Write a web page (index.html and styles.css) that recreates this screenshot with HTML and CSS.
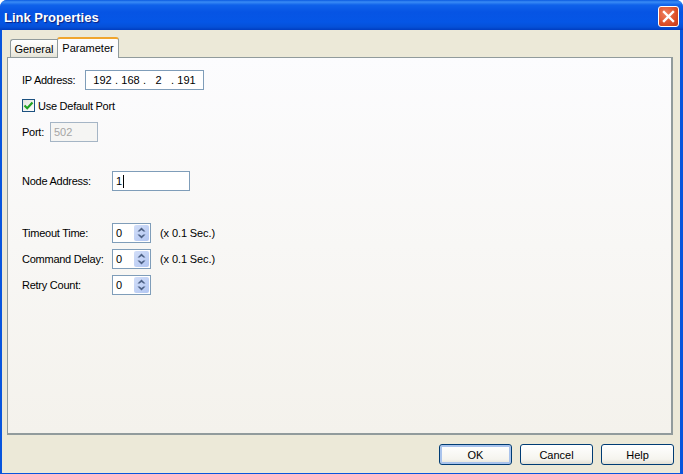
FILE: index.html
```html
<!DOCTYPE html>
<html lang="en">
<head>
<meta charset="utf-8">
<title>Link Properties</title>
<link rel="stylesheet" href="styles.css">
</head>
<body>
<div class="window">
  <header class="titlebar">
    <span class="title">Link Properties</span>
    <button class="close" aria-label="Close">
      <svg width="15" height="15" viewBox="0 0 15 15"><path d="M3 3L12 12M12 3L3 12" stroke="#fff" stroke-width="2.4" stroke-linecap="square"/></svg>
    </button>
  </header>
  <main class="client">
    <div class="tabs">
      <div class="tab">General</div>
      <div class="tab active">Parameter</div>
    </div>
    <section class="panel">
      <div class="row row-ip">
        <label class="lbl lbl-ip">IP Address:</label>
        <div class="field ip">
          <span class="oct">192</span><span class="dot">.</span><span class="oct">168</span><span class="dot">.</span><span class="oct">2</span><span class="dot">.</span><span class="oct">191</span>
        </div>
      </div>
      <div class="row row-check">
        <span class="check">
          <svg width="11" height="11" viewBox="0 0 11 11"><path d="M1.5 5.5L4.2 8.2L9.5 2.5" fill="none" stroke="#21a121" stroke-width="2.2"/></svg>
        </span>
        <label class="lbl">Use Default Port</label>
      </div>
      <div class="row row-port">
        <label class="lbl lbl-port">Port:</label>
        <div class="field port disabled">502</div>
      </div>
      <div class="row row-node">
        <label class="lbl lbl-long">Node Address:</label>
        <div class="field node">1<span class="caret"></span></div>
      </div>
      <div class="row row-timeout">
        <label class="lbl lbl-long">Timeout Time:</label>
        <div class="spin">
          <span class="spin-val">0</span>
          <span class="spin-btns">
            <svg width="15" height="16" viewBox="0 0 15 16"><path d="M7.5 2.5L11.5 6.5H9.5L7.5 5L5.5 6.5H3.5ZM3.5 9.5H5.5L7.5 11L9.5 9.5H11.5L7.5 13.5Z" fill="#4d6185"/></svg>
          </span>
        </div>
        <span class="unit">(x 0.1 Sec.)</span>
      </div>
      <div class="row row-spin">
        <label class="lbl lbl-long">Command Delay:</label>
        <div class="spin">
          <span class="spin-val">0</span>
          <span class="spin-btns">
            <svg width="15" height="16" viewBox="0 0 15 16"><path d="M7.5 2.5L11.5 6.5H9.5L7.5 5L5.5 6.5H3.5ZM3.5 9.5H5.5L7.5 11L9.5 9.5H11.5L7.5 13.5Z" fill="#4d6185"/></svg>
          </span>
        </div>
        <span class="unit">(x 0.1 Sec.)</span>
      </div>
      <div class="row row-spin">
        <label class="lbl lbl-long">Retry Count:</label>
        <div class="spin">
          <span class="spin-val">0</span>
          <span class="spin-btns">
            <svg width="15" height="16" viewBox="0 0 15 16"><path d="M7.5 2.5L11.5 6.5H9.5L7.5 5L5.5 6.5H3.5ZM3.5 9.5H5.5L7.5 11L9.5 9.5H11.5L7.5 13.5Z" fill="#4d6185"/></svg>
          </span>
        </div>
      </div>
    </section>
    <footer class="actions">
      <button class="btn default">OK</button>
      <button class="btn">Cancel</button>
      <button class="btn">Help</button>
    </footer>
  </main>
</div>
</body>
</html>
```

FILE: styles.css
```css
* { box-sizing: border-box; }
html, body { margin: 0; padding: 0; }
body { width: 683px; height: 474px; overflow: hidden; background: #fff; font: 11px "Liberation Sans", Arial, sans-serif; color: #000; }
.window { width: 683px; height: 474px; display: flex; flex-direction: column; background: #0855dd; padding: 0 3px 1px 2px; border-radius: 7px 7px 0 0; }
.titlebar { height: 30px; flex: none; margin: 0 -3px 0 -2px; padding: 0 4px 0 4px; display: flex; align-items: center; justify-content: space-between; border-radius: 7px 7px 0 0;
  background: linear-gradient(#0a5ae0 0, #3a8cf5 2px, #0f62ea 5px, #0654e4 12px, #0556e6 22px, #0550d8 27px, #003dc0 30px); }
.title { font: bold 13px "Liberation Sans", Arial, sans-serif; color: #fff; text-shadow: 1px 1px 1px #0f1f7a; margin-top: 4px; }
.close { width: 21px; height: 21px; padding: 0; margin-top: 3px; display: flex; align-items: center; justify-content: center; border: 1px solid #fff; border-radius: 3px; background: radial-gradient(circle at 35% 35%, #ef7f5e, #dd4f28 60%, #c1391a); }
.client { flex: 1; background: #ece9d8; display: flex; flex-direction: column; padding: 7px 0 0 5px; min-height: 0; }
.tabs { display: flex; align-items: flex-end; height: 20px; flex: none; padding-left: 3px; position: relative; z-index: 1; }
.tab { height: 18px; width: 47px; padding-top: 3px; text-align: center; background: linear-gradient(#fff, #f1f0e8 70%, #e4e2d6); border: 1px solid #919b9c; border-bottom: 0; border-right: 0; border-radius: 3px 0 0 0; }
.tab.active { height: 21px; width: 62px; padding-top: 3px; background: #fcfcfe; border: 1px solid #919b9c; border-top: 2px solid #f0a52e; border-bottom: 0; border-radius: 3px 3px 0 0; margin-bottom: -1px; }
.panel { height: 378px; width: 666px; flex: none; border: 1px solid #919b9c; border-right-width: 2px; border-bottom-width: 2px; background: linear-gradient(#fcfcfe, #f4f2ec); padding: 12px 14px 0; }
.row { display: flex; align-items: center; }
.row-check { margin-top: 9px; height: 13px; }
.row-port { margin-top: 10px; }
.row-node { margin-top: 29px; }
.row-timeout { margin-top: 32px; }
.row-spin { margin-top: 6px; }
.lbl { white-space: nowrap; letter-spacing: -0.25px; }
.lbl-ip { width: 63px; }
.lbl-port { width: 28px; }
.lbl-long { width: 90px; }
.field { height: 20px; border: 1px solid #7f9db9; background: #fff; display: flex; align-items: center; padding-left: 3px; }
.ip { width: 119px; padding-left: 6px; }
.oct { display: inline-block; width: 21px; text-align: center; }
.dot { width: 7px; text-align: center; }
.port { width: 48px; }
.disabled { color: #a5a5a5; border-color: #a5b5c5; background: #f5f5f3; }
.node { width: 78px; }
.caret { width: 1px; height: 13px; background: #000; margin-left: 1px; }
.check { width: 13px; height: 13px; border: 1px solid #1c5180; background: linear-gradient(135deg, #e3e3dc, #fff); margin-right: 3px; display: flex; align-items: center; justify-content: center; }
.spin { width: 39px; height: 20px; border: 1px solid #7f9db9; background: #fff; display: flex; justify-content: space-between; align-items: center; padding: 1px; }
.spin-val { padding-left: 2px; }
.spin-btns { width: 15px; height: 16px; border-radius: 2px; background: linear-gradient(135deg, #d2def8, #b2c6f2); display: block; }
.spin-btns svg { display: block; }
.unit { margin-left: 9px; letter-spacing: -0.1px; }
.actions { display: flex; justify-content: flex-end; gap: 8px; padding: 9px 6px 0 0; }
.btn { width: 73px; height: 21px; padding: 0; font: 11px "Liberation Sans", Arial, sans-serif; color: #000; border: 1px solid #003c74; border-radius: 3px; background: linear-gradient(#fff, #f5f4ee 75%, #e3e0d4); }
.btn.default { box-shadow: inset 0 0 0 2px #a9c3ec; }
```
